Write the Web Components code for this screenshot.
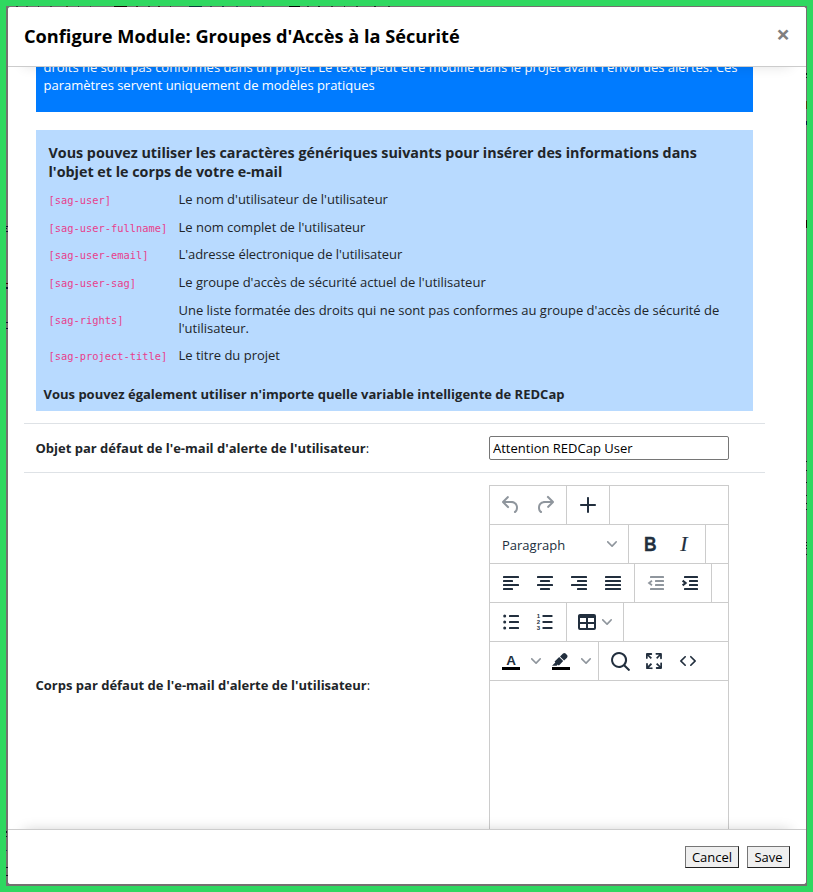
<!DOCTYPE html>
<html lang="fr">
<head>
<meta charset="utf-8">
<title>Configure Module</title>
<style>
html,body{margin:0;height:100%}
body{background:#2fd860;font-family:"Open Sans",sans-serif;font-size:13px;line-height:18.2px;color:#212529;overflow:hidden}
</style>
</head>
<body>
<module-dialog>
  <span slot="title">Configure Module: Groupes d'Accès à la Sécurité</span>
  <blue-notice>droits ne sont pas conformes dans un projet. Le texte peut être modifié dans le projet avant l'envoi des alertes. Ces<br>paramètres servent uniquement de modèles pratiques</blue-notice>
  <wildcard-panel>
    <span slot="heading">Vous pouvez utiliser les caractères génériques suivants pour insérer des informations dans<br>l'objet et le corps de votre e-mail</span>
    <wildcard-row code="[sag-user]">Le nom d'utilisateur de l'utilisateur</wildcard-row>
    <wildcard-row code="[sag-user-fullname]">Le nom complet de l'utilisateur</wildcard-row>
    <wildcard-row code="[sag-user-email]" style="letter-spacing:-.06px">L'adresse électronique de l'utilisateur</wildcard-row>
    <wildcard-row code="[sag-user-sag]">Le groupe d'accès de sécurité actuel de l'utilisateur</wildcard-row>
    <wildcard-row code="[sag-rights]">Une liste formatée des droits qui ne sont pas conformes au groupe d'accès de sécurité de<br>l'utilisateur.</wildcard-row>
    <wildcard-row code="[sag-project-title]">Le titre du projet</wildcard-row>
    <span slot="footer">Vous pouvez également utiliser n'importe quelle variable intelligente de REDCap</span>
  </wildcard-panel>
  <setting-row style="height:48px"><span slot="label">Objet par défaut de l'e-mail d'alerte de l'utilisateur</span><text-field value="Attention REDCap User"></text-field></setting-row>
  <setting-row style="height:424px"><span slot="label">Corps par défaut de l'e-mail d'alerte de l'utilisateur</span><rich-editor></rich-editor></setting-row>
  <plain-button slot="actions" style="width:54px">Cancel</plain-button>
  <plain-button slot="actions" style="width:43px">Save</plain-button>
</module-dialog>
<script>
const define = (name, html, setup) => customElements.define(name, class extends HTMLElement {
  constructor() {
    super();
    this.attachShadow({mode: 'open'});
  }
  connectedCallback() {
    this.shadowRoot.innerHTML = html;
    if (setup) setup(this, this.shadowRoot);
  }
});

/* Slivers of the dimmed page that show around the dialog: [x, y, width, height, colour] inside the backdrop. */
const slivers = [
  [108,0,13,1,'#1d0505'],[183,0,13,1,'#0e3a40'],[283,0,11,1,'#050505'],
  [10,0,2,1,'#333'],[20,0,2,1,'#444'],[32,0,1,1,'#333'],[44,0,2,1,'#444'],[60,0,2,1,'#4a3a20'],[72,0,1,1,'#333'],[84,0,1,1,'#444'],
  [130,0,2,1,'#402020'],[142,0,2,1,'#333'],[152,0,2,1,'#402020'],[164,0,1,1,'#333'],
  [204,0,2,1,'#345'],[216,0,2,1,'#234'],[230,0,2,1,'#345'],[244,0,1,1,'#234'],[256,0,2,1,'#345'],
  [301,0,2,1,'#333'],[312,0,2,1,'#222'],[325,0,2,1,'#333'],[338,0,1,1,'#222'],[350,0,2,1,'#333'],[368,0,2,1,'#222'],[382,0,2,1,'#333'],
  [0,220,2,1,'#113'],[0,222,1,1,'#113'],[0,225,2,1,'#113'],[0,277,2,1,'#400'],[0,281,2,2,'#113'],
  [0,316,2,1,'#113'],[0,322,2,1,'#113'],[0,825,1,2,'#112'],[0,830,1,1,'#112'],[0,844,1,1,'#235'],[0,861,2,1,'#112'],[0,869,2,1,'#112'],
  [800,67,1,2,'#111'],[800,71,1,1,'#111'],[800,95,1,8,'#5a3a10'],[800,115,1,4,'#114'],[800,214,1,8,'#200'],
  [800,455,1,1,'#111'],[800,464,1,1,'#111'],[800,476,1,1,'#111'],[800,489,1,1,'#111'],[800,497,1,1,'#111'],[800,503,1,1,'#111'],
  [800,536,1,1,'#111'],[800,539,1,1,'#111'],[800,542,1,1,'#111'],[800,548,1,1,'#111']
].map(([x, y, w, h, c]) => `linear-gradient(${c},${c}) ${x}px ${y}px/${w}px ${h}px no-repeat`).join(',');

define('module-dialog', `<style>
:host{display:block;box-sizing:border-box;height:892px;padding:6px}
.back{box-sizing:border-box;height:880px;width:801px;background:${slivers},#757070;padding:1px 1px 2px 2px}
.dialog{height:877px;background:#fff;border-radius:3px;display:flex;flex-direction:column;overflow:hidden}
header{flex:none;box-sizing:border-box;height:60px;border-bottom:1px solid #ccc;display:flex;justify-content:space-between;padding:0 17px 0 16px;position:relative;background:#fff;z-index:1;box-shadow:0 14px 14px -16px rgba(0,0,0,.16)}
h1{margin:0;font-size:18.2px;line-height:27px;padding-top:16px;font-weight:700;color:#000;white-space:nowrap}
.close{font-size:24px;font-weight:700;color:#7f7f7f;line-height:24px;padding-top:15px;margin-right:-1px}
main{flex:1;min-height:0;overflow:hidden;padding:0 41px 0 16px}
footer{flex:none;box-sizing:border-box;height:55px;border-top:1px solid #ccc;display:flex;justify-content:flex-end;gap:8px;padding:16px 16px 0;position:relative;background:#fff;box-shadow:0 -14px 14px -16px rgba(0,0,0,.22)}
</style>
<div class="back"><section class="dialog"><header><h1><slot name="title"></slot></h1><span class="close">×</span></header>
<main><slot></slot></main><footer><slot name="actions"></slot></footer></section></div>`);

define('blue-notice', `<style>
:host{display:block;box-sizing:border-box;height:45px;margin:0 12px;background:#007bff;color:#fff;padding-left:7.5px;white-space:nowrap;overflow:hidden;letter-spacing:-.017px}
div{margin-top:-9px}
</style><div><slot></slot></div>`);

define('wildcard-panel', `<style>
:host{display:block;box-sizing:border-box;height:281px;margin:18px 12px 12px;background:#b8daff;padding:12.5px 7.5px 0 12.5px}
.h{font-size:14.3px;line-height:19px;font-weight:700;white-space:nowrap;margin-bottom:5px}
.f{font-weight:700;margin:16px 0 0 -5px}
</style><div class="h"><slot name="heading"></slot></div><slot></slot><div class="f"><slot name="footer"></slot></div>`);

define('wildcard-row', `<style>
:host{display:flex;align-items:center;padding:4.7px 0;white-space:nowrap;letter-spacing:-.01px}
code{width:130px;flex:none;font:10.4px/18px "DejaVu Sans Mono",monospace;letter-spacing:0;color:#e83e8c;padding-top:1px;height:17px}
</style><code></code><div><slot></slot></div>`, (el, root) => {
  root.querySelector('code').textContent = el.getAttribute('code');
});

define('setting-row', `<style>
:host{display:flex;align-items:center;border-top:1px solid #dee2e6;box-sizing:content-box}
.l{width:453.5px;flex:none;padding-left:11.5px;white-space:nowrap}
b{font-weight:700}
</style><div class="l"><b><slot name="label"></slot></b>:</div><slot></slot>`);

define('text-field', `<style>
:host{display:block}
input{display:block;box-sizing:border-box;width:240px;height:24px;border:1px solid #767676;border-radius:2px;padding:0 3px;font:13px "Open Sans",sans-serif;color:#000;background:#fff}
</style><input>`, (el, root) => {
  root.querySelector('input').setAttribute('value', el.getAttribute('value'));
});

define('plain-button', `<style>
:host{display:block}
button{box-sizing:border-box;width:100%;height:22px;border:1px solid;border-color:#767676 #212121 #212121 #767676;background:#efefef;border-radius:0;padding:0;font:13px/18px "Open Sans",sans-serif;color:#000;display:block}
</style><button><slot></slot></button>`);

const lines = spans => spans.map(([x, w], i) => `<rect x="${x}" y="${5 + i * 4}" width="${w}" height="2" rx=".6"/>`).join('');
const icons = {
  undo: '<path d="M6.4 8H12c3.7 0 6.2 2 6.8 5.1.6 2.7-.4 5.6-2.3 6.8a1 1 0 01-1-1.8c1.1-.6 1.8-2.7 1.4-4.6-.5-2.1-2.1-3.5-4.9-3.5H6.4l3.3 3.3a1 1 0 11-1.4 1.4l-5-5a1 1 0 010-1.4l5-5a1 1 0 011.4 1.4L6.4 8z"/>',
  redo: '<path d="M17.6 10H12c-2.8 0-4.4 1.4-4.9 3.5-.4 2 .3 4 1.4 4.6a1 1 0 11-1 1.8c-2-1.2-2.9-4.1-2.3-6.8.6-3 3-5.1 6.8-5.1h5.6l-3.3-3.3a1 1 0 111.4-1.4l5 5a1 1 0 010 1.4l-5 5a1 1 0 01-1.4-1.4l3.3-3.3z"/>',
  plus: '<path d="M12 4c.5 0 1 .4 1 .9V11h6a1 1 0 01.1 2H13v6a1 1 0 01-2 .1V13H5a1 1 0 01-.1-2H11V5c0-.6.4-1 1-1z"/>',
  bold: '<text x="5.9" y="19" font-family="Liberation Sans" font-weight="700" font-size="19.5" textLength="12.6" lengthAdjust="spacingAndGlyphs" stroke="#222f3e" stroke-width=".3">B</text>',
  italic: '<text x="8.2" y="19" font-family="Liberation Serif" font-style="italic" font-size="21.5" stroke="#222f3e" stroke-width=".2">I</text>',
  left: lines([[4,16],[4,10],[4,16],[4,10]]),
  center: lines([[4,16],[7,10],[4,16],[7,10]]),
  right: lines([[4,16],[10,10],[4,16],[10,10]]),
  justify: lines([[4,16],[4,16],[4,16],[4,16]]),
  outdent: lines([[6,14],[11,9],[11,9],[6,14]]) + '<path d="M8 9.8L5 12l3 2.2" fill="none" stroke="#222f3e" stroke-width="1.7"/>',
  indent: lines([[6,14],[11,9],[11,9],[6,14]]) + '<path d="M4.6 9.6L7.6 12l-3 2.4" fill="none" stroke="#222f3e" stroke-width="2.1"/>',
  bullets: [6,12,18].map(y => `<circle cx="5.7" cy="${y}" r="1.5"/><rect x="10" y="${y - 1}" width="10" height="2" rx=".6"/>`).join(''),
  numbers: [6,12,18].map((y, i) => `<text x="3.8" y="${y + 2.1}" font-family="Liberation Sans" font-weight="700" font-size="6">${i + 1}</text><rect x="9.5" y="${y - 1}" width="10" height="2" rx=".6"/>`).join(''),
  table: '<path fill-rule="evenodd" d="M19 4a2 2 0 012 2v12a2 2 0 01-2 2H5a2 2 0 01-2-2V6c0-1.1.9-2 2-2h14zM5 14v4h6v-4H5zm14 0h-6v4h6v-4zm0-6h-6v4h6V8zM5 12h6V8H5v4z"/>',
  color: '<path fill="#000" d="M3 18h18v3H3z"/><text x="7.2" y="16" font-family="Liberation Sans" font-weight="700" font-size="13.5">A</text>',
  highlight: '<path fill="#000" d="M3 18h18v3H3z"/><path d="M7.7 16.7H3l3.3-3.3-.7-.8L10.2 8l4 4.1-4 4.2c-.2.2-.6.2-.8 0l-.6-.7-1.1 1.1zm5-7.5L11 7.4l3-2.9a2 2 0 012.6 0L18 6c.7.7.7 2 0 2.7l-2.9 2.9-1.8-1.8-.5-.6"/>',
  search: '<path d="M16 17.3a8 8 0 111.4-1.4l4.3 4.4a1 1 0 01-1.4 1.4l-4.4-4.3zm-5-.3a6 6 0 100-12 6 6 0 000 12z"/>',
  fullscreen: '<path d="M15.3 10l-1.2-1.3 2.9-3h-2.3a.9.9 0 110-1.7H19c.5 0 .9.4.9.9v4.4a.9.9 0 11-1.8 0V7l-2.9 3zm0 4l3 3v-2.3a.9.9 0 111.7 0V19c0 .5-.4.9-.9.9h-4.4a.9.9 0 110-1.8H17l-3-2.9 1.3-1.2zM10 15.4l-2.9 3h2.3a.9.9 0 110 1.7H5a.9.9 0 01-.9-.9v-4.4a.9.9 0 111.8 0V17l2.9-3 1.2 1.3zM8.7 10L5.7 7v2.3a.9.9 0 01-1.7 0V5c0-.5.4-.9.9-.9h4.4a.9.9 0 010 1.8H7l3 2.9-1.3 1.2z"/>',
  source: '<path d="M9.8 15.7c.3.3.3.8 0 1-.3.4-.9.4-1.2 0l-4.4-4.1a.8.8 0 010-1.2l4.4-4.2c.3-.3.9-.3 1.2 0 .3.3.3.8 0 1.1L6 12l3.8 3.7zM14.2 15.7c-.3.3-.3.8 0 1 .4.4.9.4 1.2 0l4.4-4.1c.3-.3.3-.9 0-1.2l-4.4-4.2a.8.8 0 00-1.2 0c-.3.3-.3.8 0 1.1L18 12l-3.8 3.7z"/>'
};
const chevron = '<svg class="chev" viewBox="0 0 10 10" width="10" height="10"><path d="M8.7 2.2c.3-.3.8-.3 1 0 .4.4.4.9 0 1.2L5.7 7.8c-.3.3-.9.3-1.2 0L.2 3.4a.8.8 0 010-1.2c.3-.3.8-.3 1.1 0L5 6l3.7-3.8z"/></svg>';

define('tool-button', `<style>
:host{display:flex;align-items:center;width:34px;height:34px;fill:#222f3e}
:host([menu]){width:50px}
:host([label]){width:130px;font-size:13px;color:#222f3e}
:host([off]) .icon{opacity:.5}
svg{display:block;flex:none}
.icon{margin-left:5px}
.chev{opacity:.5;margin-left:8px}
:host([menu=table]) .icon{margin-left:4px}
:host([menu=table]) .chev{margin-left:3px}
:host([label]) .chev{margin:0 7px 0 auto}
.t{padding-left:8px;padding-top:2px}
</style>`, (el, root) => {
  const label = el.getAttribute('label'), icon = el.getAttribute('icon');
  const body = label ? `<span class="t">${label}</span>` : `<svg class="icon" viewBox="0 0 24 24" width="24" height="24">${icons[icon]}</svg>`;
  root.innerHTML += body + (label || el.hasAttribute('menu') ? chevron : '');
});

define('tool-group', `<style>
:host{display:flex;align-items:center;height:38px;padding:0 4px;border-right:1px solid #ccc}
:host([last]){border-right:0}
</style><slot></slot>`);

define('rich-editor', `<style>
:host{display:block;box-sizing:border-box;width:240px;height:400px;border:1px solid #ccc;background:#fff}
.row{display:flex;height:38px;border-bottom:1px solid #ccc}
</style>
<div class="row"><tool-group><tool-button icon="undo" off></tool-button><tool-button icon="redo" off></tool-button></tool-group><tool-group><tool-button icon="plus"></tool-button></tool-group></div>
<div class="row"><tool-group><tool-button label="Paragraph"></tool-button></tool-group><tool-group><tool-button icon="bold"></tool-button><tool-button icon="italic"></tool-button></tool-group></div>
<div class="row"><tool-group><tool-button icon="left"></tool-button><tool-button icon="center"></tool-button><tool-button icon="right"></tool-button><tool-button icon="justify"></tool-button></tool-group><tool-group><tool-button icon="outdent" off></tool-button><tool-button icon="indent"></tool-button></tool-group></div>
<div class="row"><tool-group><tool-button icon="bullets"></tool-button><tool-button icon="numbers"></tool-button></tool-group><tool-group><tool-button icon="table" menu="table" style="width:48px"></tool-button></tool-group></div>
<div class="row"><tool-group><tool-button icon="color" menu></tool-button><tool-button icon="highlight" menu></tool-button></tool-group><tool-group last><tool-button icon="search"></tool-button><tool-button icon="fullscreen"></tool-button><tool-button icon="source"></tool-button></tool-group></div>`);
</script>
</body>
</html>
